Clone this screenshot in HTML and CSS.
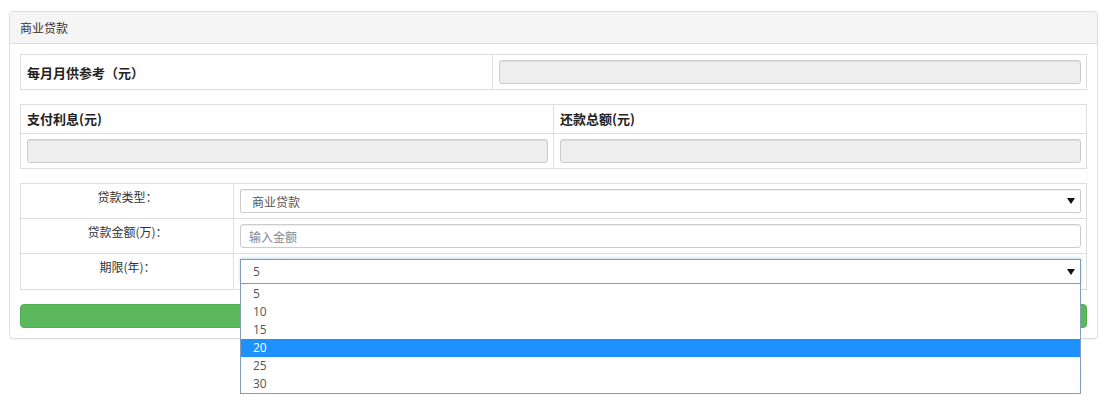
FILE: index.html
```html
<!DOCTYPE html>
<html lang="zh-CN">
<head>
    <meta charset="UTF-8">
    <meta name="viewport" content="width=device-width, initial-scale=1.0">
    <title>商业贷款计算器</title>
    <link rel="stylesheet" href="styles.css">
</head>
<body>

<div class="panel">
    <div class="panel-heading">商业贷款</div>
    <div class="panel-body">

        <table class="calc-table monthly">
            <tr>
                <th class="label-col">每月月供参考（元）</th>
                <td><input type="text" class="form-control" readonly></td>
            </tr>
        </table>

        <table class="calc-table totals">
            <tr>
                <th>支付利息(元)</th>
                <th>还款总额(元)</th>
            </tr>
            <tr>
                <td><input type="text" class="form-control" readonly></td>
                <td><input type="text" class="form-control" readonly></td>
            </tr>
        </table>

        <table class="calc-table form-table">
            <tr>
                <td class="field-label">贷款类型：</td>
                <td>
                    <div class="select-wrap">
                        <select class="form-control">
                            <option>商业贷款</option>
                            <option>公积金贷款</option>
                        </select>
                    </div>
                </td>
            </tr>
            <tr>
                <td class="field-label">贷款金额(万)：</td>
                <td><input type="text" class="form-control" placeholder="输入金额"></td>
            </tr>
            <tr>
                <td class="field-label">期限(年)：</td>
                <td>
                    <div class="select-wrap open">
                        <select class="form-control">
                            <option>5</option>
                            <option>10</option>
                            <option>15</option>
                            <option>20</option>
                            <option>25</option>
                            <option>30</option>
                        </select>
                        <ul class="dropdown">
                            <li>5</li>
                            <li>10</li>
                            <li>15</li>
                            <li class="active">20</li>
                            <li>25</li>
                            <li>30</li>
                        </ul>
                    </div>
                </td>
            </tr>
        </table>

        <button class="btn-calc" type="button"></button>
    </div>
</div>

</body>
</html>
```

FILE: styles.css
```css
html, body {
    min-height: 100%;
}

body {
    margin: 0;
    min-height: 407px;
    box-sizing: border-box;
    padding: 11px 8px 0 9px;
    font-family: "Open Sans", "Noto Sans CJK SC", sans-serif;
    font-size: 12px;
    color: #333;
    background-color: #fff;
}

.panel {
    width: 1089px;
    box-sizing: border-box;
    border: 1px solid #ddd;
    border-radius: 4px;
    box-shadow: 0 1px 1px rgba(0, 0, 0, 0.05);
}

.panel-heading {
    height: 31px;
    line-height: 31px;
    padding: 0 10px;
    background-color: #f5f5f5;
    border-bottom: 1px solid #ddd;
    border-radius: 3px 3px 0 0;
    font-family: "Noto Sans CJK SC", sans-serif;
}

.panel-body {
    padding: 10px;
}

.calc-table {
    width: 100%;
    border-collapse: collapse;
    margin-bottom: 14px;
}

.calc-table th,
.calc-table td {
    border: 1px solid #ddd;
    padding: 5px 5px 5px 6px;
    text-align: left;
    font-family: "Noto Sans CJK SC", sans-serif;
}

.calc-table th {
    font-size: 13px;
    font-weight: bold;
    color: #222;
}

.monthly .label-col {
    width: 460px;
    height: 24px;
}

.totals th {
    width: 50%;
    height: 17px;
    padding-top: 4px;
}

.totals th:first-child {
    width: 519px;
}

.form-table .field-label {
    width: 201px;
    text-align: center;
    vertical-align: top;
    padding-top: 4px;
    line-height: 17px;
}

.form-control {
    display: block;
    width: 100%;
    height: 24px;
    box-sizing: border-box;
    padding: 2px 12px;
    border: 1px solid #ccc;
    border-radius: 3px;
    background-color: #fff;
    color: #555;
    font-family: "Noto Sans CJK SC", sans-serif;
    font-size: 12px;
    box-shadow: inset 0 1px 1px rgba(0, 0, 0, 0.075);
    outline: none;
}

.form-control[readonly] {
    background-color: #eee;
}

.form-control::placeholder {
    color: #888;
}

input.form-control {
    padding-left: 8px;
}

.select-wrap {
    position: relative;
}

.select-wrap select {
    appearance: none;
    -webkit-appearance: none;
    border-radius: 2px;
    padding-left: 11px;
}

.select-wrap::after {
    content: "";
    position: absolute;
    right: 6px;
    top: 9px;
    border-left: 4px solid transparent;
    border-right: 4px solid transparent;
    border-top: 6px solid #111;
    pointer-events: none;
}

.select-wrap.open select {
    height: 25px;
    border-color: #7f9db9;
    border-radius: 0;
    font-family: "Open Sans", sans-serif;
    padding-left: 12px;
    box-shadow: 0 -1px 3px rgba(102, 175, 233, 0.4);
}

.select-wrap.open::after {
    top: 10px;
}

.dropdown {
    position: absolute;
    top: 25px;
    left: 0;
    right: 0;
    margin: 0;
    padding: 1px 0 0;
    list-style: none;
    background-color: #fff;
    border: 1px solid #7f9db9;
    border-top: none;
    z-index: 10;
}

.dropdown li {
    height: 18px;
    line-height: 18px;
    padding-left: 12px;
    font-family: "Open Sans", sans-serif;
    font-size: 12px;
    color: #555;
}

.dropdown li.active {
    background-color: #1e90ff;
    color: #fff;
}

.btn-calc {
    display: block;
    width: 100%;
    height: 24px;
    border: 1px solid #4cae4c;
    border-radius: 4px;
    background-color: #5cb85c;
    cursor: pointer;
}
```
